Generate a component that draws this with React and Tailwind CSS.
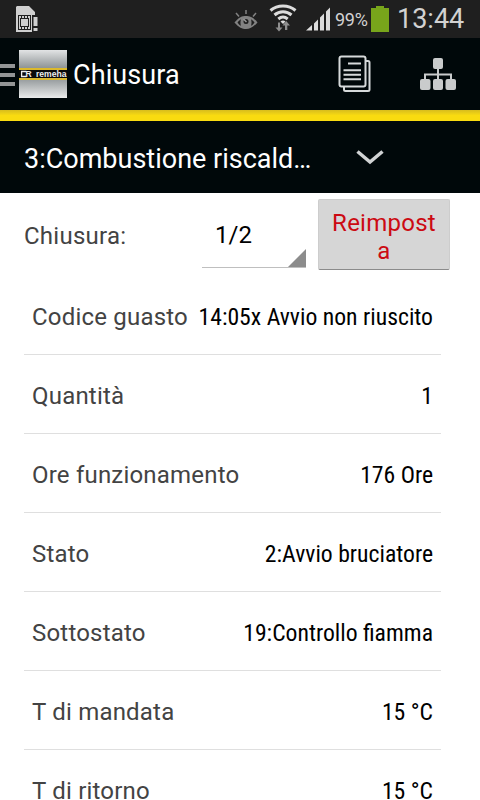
import React from 'react'

const rows = [
  { label: 'Codice guasto', value: '14:05x Avvio non riuscito' },
  { label: 'Quantità', value: '1' },
  { label: 'Ore funzionamento', value: '176 Ore' },
  { label: 'Stato', value: '2:Avvio bruciatore' },
  { label: 'Sottostato', value: '19:Controllo fiamma' },
  { label: 'T di mandata', value: '15 °C' },
  { label: 'T di ritorno', value: '15 °C' },
]

function SimIcon() {
  return (
    <svg width="24" height="28" viewBox="0 0 24 28">
      <path d="M2 1h12l6 6v10h-3v10H1V2z" fill="#cfcfcf" />
      <rect x="3.5" y="10.5" width="12" height="14" fill="none" stroke="#1f1f1f" />
      <rect x="5" y="13" width="9" height="9" fill="#1f1f1f" />
      <rect x="6" y="14" width="7" height="7" fill="#cfcfcf" />
      <path d="M6.500 11v2M9.500 11v2M12.500 11v2M6.500 22v2M9.500 22v2M12.500 22v2" stroke="#1f1f1f" />
      <path d="M17 10h6v17h-6z" fill="#1f1f1f" />
      <path d="M18.500 12h4v9h-4zM18.500 23h4v3h-4z" fill="#cfcfcf" />
    </svg>
  )
}

function EyeIcon() {
  return (
    <svg width="24" height="20" viewBox="0 0 24 20" fill="none">
      <path d="M0.500 12.500C5 7 8 6 12 6s7 1 11.500 6.500C19 17.500 16 19 12 19S5 17.500 0.500 12.500z" fill="#828282" />
      <path d="M3.500 12.500c1-1.500 2-2.500 3.500-3.300-.7 2.300-.7 4.500 0 6.600-1.500-.8-2.500-1.800-3.500-3.300zM20.500 12.500c-1-1.500-2-2.500-3.500-3.300.7 2.300.7 4.500 0 6.600 1.500-.8 2.500-1.800 3.500-3.300z" fill="#1f1f1f" />
      <circle cx="12" cy="11.500" r="2.500" fill="#1f1f1f" />
      <path d="M9.500 9l3 3" stroke="#999" strokeWidth="1.500" />
      <path d="M12 0v4M2 3l3 3.500M22 3l-3 3.500" stroke="#828282" strokeWidth="1.500" />
    </svg>
  )
}

function WifiIcon() {
  return (
    <svg width="28" height="28" viewBox="0 0 28 28" fill="none">
      <path d="M1.500 6.500c7-6 18-6 25 0M5.500 11c5-4.400 12-4.400 17 0M9.300 15c3-2.500 6.400-2.500 9.400 0" stroke="#dcdcdc" strokeWidth="3" />
      <path d="M14 20l-2.500-2.500c1.500-1.200 3.500-1.200 5 0z" fill="#dcdcdc" />
      <path d="M9 18.500h2v5h2.500L10 27.500l-3.500-4H9zM16 26h2.300v-4.500H21l-3.800-4.500-3.700 4.500H16z" fill="#8e8e8e" />
    </svg>
  )
}

function SignalIcon() {
  return (
    <svg width="24" height="24" viewBox="0 0 24 24" fill="#dcdcdc">
      <path d="M0 23.500L6 18v5.500zM8 16.500l4-4v11H8zM14 10.500l4-4v17H14zM20 4.500L24 0.500v23H20z" />
    </svg>
  )
}

function DocumentsIcon() {
  return (
    <svg width="33" height="38" viewBox="0 0 33 38" fill="none" stroke="#d6dadb" strokeWidth="2">
      <path d="M27 6h3a1.500 1.500 0 0 1 1.500 1.500v27A1.500 1.500 0 0 1 30 36H7.500A1.500 1.500 0 0 1 6 34.500V32" />
      <rect x="1.500" y="1.500" width="26" height="30" rx="2" />
      <path d="M10 8.500h13M5.500 15.200h17.500M5.500 19.700h17.500M5.500 24.200h17.500" />
    </svg>
  )
}

function NetworkIcon() {
  return (
    <svg width="36" height="33" viewBox="0 0 36 33" fill="#c9cbcc">
      <rect x="13" y="0" width="10" height="11" rx="2" />
      <rect x="0" y="21" width="10.500" height="11" rx="2" />
      <rect x="13" y="21" width="10" height="11" rx="2" />
      <rect x="25.500" y="21" width="10.500" height="11" rx="2" />
      <path d="M18 10v12M5 22v-5.500h26V22" fill="none" stroke="#c9cbcc" strokeWidth="2" />
    </svg>
  )
}

function StatusBar() {
  return (
    <div className="flex h-[38px] shrink-0 bg-[#1f1f1f] pl-[15px] text-[#d2d2d2]">
      <div className="pt-[5px]"><SimIcon /></div>
      <div className="ml-[195px] pt-[10px]"><EyeIcon /></div>
      <div className="ml-[11px] pt-[4px]"><WifiIcon /></div>
      <div className="ml-[9px] pt-[7px]"><SignalIcon /></div>
      <span className="ml-[5px] w-[36px] whitespace-nowrap text-[18px] leading-[40px] tracking-[-0.3px]">99%</span>
      <svg className="mt-[6px]" width="18" height="26" viewBox="0 0 18 26">
        <path d="M5 0h8v2h5v24H0V2h5z" fill="#78a51b" />
      </svg>
      <span className="ml-[8px] whitespace-nowrap text-[27px] leading-[39px]">13:44</span>
    </div>
  )
}

function AppLogo() {
  return (
    <div className="ml-1 flex h-12 w-12 flex-col overflow-hidden">
      <div className="h-[18px] shrink-0 bg-linear-to-b from-[#e2e4e5] to-[#8f9496]" />
      <div className="h-[2px] shrink-0 bg-[#dcb92c]" />
      <svg className="block shrink-0 bg-[#0a0a0a]" width="48" height="8" viewBox="0 0 48 8">
        <path d="M7.500 1.500H2.600v5h4.900" fill="none" stroke="#eee" strokeWidth="1.300" />
        <text x="6.500" y="7.100" fill="#eee" fontSize="8.500" fontWeight="bold" fontFamily="Liberation Sans, sans-serif">R</text>
        <text x="17" y="7" fill="#eee" fontSize="9" fontWeight="bold" fontFamily="Liberation Sans, sans-serif" textLength="30.500" lengthAdjust="spacingAndGlyphs">remeha</text>
      </svg>
      <div className="h-[2px] shrink-0 bg-[#dcb92c]" />
      <div className="h-[18px] shrink-0 bg-linear-to-b from-[#9a9fa1] to-[#ebecec]" />
    </div>
  )
}

function ActionBar() {
  return (
    <header className="flex h-[72px] shrink-0 items-center bg-[#00080a] text-white">
      <div className="flex w-[15px] flex-col gap-[5px] pt-[2px]">
        <div className="h-1 bg-[#939596]" />
        <div className="h-1 bg-[#939596]" />
        <div className="h-1 bg-[#939596]" />
      </div>
      <AppLogo />
      <h1 className="ml-[6px] w-[265px] pt-[2px] text-[27px] leading-[36px] tracking-[0.1px]">Chiusura</h1>
      <DocumentsIcon />
      <div className="ml-[49px]"><NetworkIcon /></div>
    </header>
  )
}

export default function App() {
  return (
    <div className="flex h-[800px] w-[480px] flex-col overflow-hidden bg-white font-['Roboto',sans-serif]">
      <StatusBar />
      <ActionBar />
      <div className="h-[11px] shrink-0 bg-linear-to-b from-[#d8bd1c] to-[#f9db10] to-50%" />

      {/* Zone selector */}
      <div className="flex h-[72px] shrink-0 items-center bg-[#00080a] pl-6 text-white">
        <span className="w-[332px] whitespace-nowrap pt-[4px] text-[27px]">3:Combustione riscald…</span>
        <svg width="28" height="16" viewBox="0 0 28 16" fill="none">
          <path d="M1.500 2.500l12.500 10.500L26.500 2.500" stroke="#d0d3d4" strokeWidth="3.500" />
        </svg>
      </div>

      <div className="flex h-[83px] shrink-0 pl-6">
        <span className="w-[178px] pt-[27px] text-[24px] leading-[32px] tracking-[0.25px] text-[#434343]">Chiusura:</span>
        <div className="mt-[6px] flex h-[69px] w-[104px] justify-between border-b border-[#bfbfbf]">
          <span className="pl-[13px] pt-[20px] text-[24px] leading-[32px] text-black">1/2</span>
          <svg className="self-end" width="18" height="18" viewBox="0 0 18 18">
            <path d="M18 0v18H0z" fill="#8c8c8c" />
          </svg>
        </div>
        <button className="ml-3 mt-[6px] h-[71px] w-[132px] rounded-[2px] border border-[#cdcdcd] border-b-[#8b8b8b] bg-[#d6d6d6] pt-[5px] text-[24px] leading-[28px] tracking-[0.25px] text-[#cc0a12]">
          Reimpost<br />a
        </button>
      </div>

      <main className="pl-6">
        {rows.map(row => (
          <div key={row.label} className="flex h-[79px] w-[417px] items-center justify-between border-b border-[#dfdfdf] px-2 pt-1 text-[24px] whitespace-nowrap">
            <span className="tracking-[0.2px] text-[#434343]">{row.label}</span>
            <span className="pt-[2px] font-['Roboto_Condensed','Roboto',sans-serif] font-stretch-condensed text-[23.7px] text-black">{row.value}</span>
          </div>
        ))}
      </main>
    </div>
  )
}
